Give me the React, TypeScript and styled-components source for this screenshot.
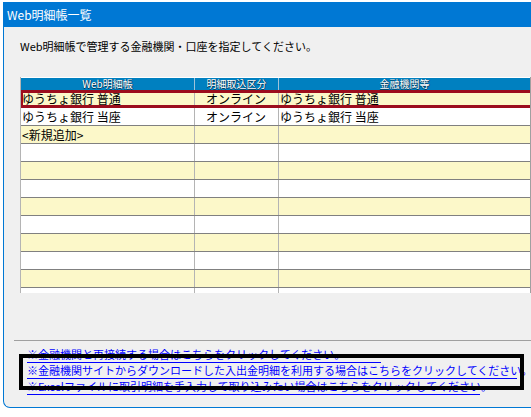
import React from 'react'
import styled, { createGlobalStyle } from 'styled-components'

const GlobalStyle = createGlobalStyle`
    html, body {
        margin     : 0;
        padding    : 0;
        background : #ffffff;
        overflow   : hidden;
    }
    body {
        font-family : "Noto Sans CJK JP", "Noto Sans", sans-serif;
    }
`

type Row = { name: string; mode: string; bank: string }

const rows: Row[] = [
    { name: 'ゆうちょ銀行 普通', mode: 'オンライン', bank: 'ゆうちょ銀行 普通' },
    { name: 'ゆうちょ銀行 当座', mode: 'オンライン', bank: 'ゆうちょ銀行 当座' },
    { name: '<新規追加>', mode: '', bank: '' },
    ...Array.from({ length: 9 }, () => ({ name: '', mode: '', bank: '' })),
]

const links = [
    { text: '※金融機関と再接続する場合はこちらをクリックしてください。', width: 354 },
    { text: '※金融機関サイトからダウンロードした入出金明細を利用する場合はこちらをクリックしてください。', width: 490 },
    { text: '※Excelファイルに取引明細を手入力して取り込みたい場合はこちらをクリックしてください。', width: 453 },
]

const App = () => {
    return (
        <>
            <GlobalStyle />
            <Window>
                <TitleBar>Web明細帳一覧</TitleBar>
                <Content>
                    <Instruction>Web明細帳で管理する金融機関・口座を指定してください。</Instruction>
                    <Table>
                        <HeaderRow>
                            <HeaderCell>Web明細帳</HeaderCell>
                            <HeaderCell>明細取込区分</HeaderCell>
                            <HeaderCell>金融機関等</HeaderCell>
                        </HeaderRow>
                        {rows.map((row, i) => (
                            <BodyRow key={i} $striped={i % 2 === 0} $selected={i === 0}>
                                <Cell>{row.name}</Cell>
                                <Cell $pad={11}>{row.mode}</Cell>
                                <Cell>{row.bank}</Cell>
                            </BodyRow>
                        ))}
                    </Table>
                    <Separator />
                    <LinkArea>
                        {links.map((link, i) => (
                            <LinkLine key={i} $width={link.width}>{link.text}</LinkLine>
                        ))}
                        <FocusFrame />
                    </LinkArea>
                </Content>
            </Window>
        </>
    )
}

export default App

const Window = styled.div`
    margin-top                : 2px;
    margin-left               : 3px;
    width                     : 527px;
    border-left               : 1px solid #0078d4;
    border-bottom             : 1px solid #0078d4;
    border-bottom-left-radius : 7px;
    overflow                  : hidden;
    background                : #f0f0f0;
`

const TitleBar = styled.div`
    height       : 25px;
    line-height  : 25px;
    padding-left : 3px;
    background   : #0078d4;
    color        : #ffffff;
    font-size    : 12px;
`

const Content = styled.div`
    height      : 380px;
    padding-top : 11px;
    box-sizing  : border-box;
`

const Instruction = styled.div`
    margin-left : 16px;
    font-size   : 11px;
    line-height : 16px;
    color       : #000000;
    white-space : nowrap;
`

const Table = styled.div`
    margin-top   : 23px;
    margin-left  : 16px;
    width        : 511px;
    height       : 216px;
    overflow     : hidden;
    border-left  : 1px solid #b4b4b4;
    border-right : 1px solid #a0a0a0;
    box-sizing   : border-box;
    background   : #ffffff;
`

const columns = '174px 84px 1fr'

const HeaderRow = styled.div`
    display               : grid;
    grid-template-columns : ${columns};
    height                : 13px;
    background            : #0080c0;
    border-top            : 1px solid #ffffff;
    box-sizing            : border-box;
`

const HeaderCell = styled.div`
    text-align   : center;
    color        : #ffffff;
    font-size    : 10px;
    line-height  : 12px;
    white-space  : nowrap;
    text-shadow  : 1px 0 0 #003a5c, 0 1px 0 #003a5c;
    border-right : 1px solid #9fc3da;

    &:last-child {
        border-right : 0;
    }
`

const BodyRow = styled.div<{ $striped: boolean; $selected: boolean }>`
    position              : relative;
    display               : grid;
    grid-template-columns : ${columns};
    height                : 18px;
    background            : ${p => (p.$striped ? '#fcf8c9' : '#ffffff')};
    border-bottom         : 1px solid #808080;
    box-sizing            : border-box;

    &::after {
        content        : "";
        display        : ${p => (p.$selected ? 'block' : 'none')};
        position       : absolute;
        inset          : 0 -4px -1px -1px;
        border         : 3px solid #9c0d1d;
        pointer-events : none;
    }
`

const Cell = styled.div<{ $pad?: number }>`
    padding-left : ${p => p.$pad ?? 1}px;
    font-size    : 12px;
    line-height  : 17px;
    color        : #000000;
    white-space  : nowrap;
    overflow     : hidden;
    border-right : 1px solid #b4b4b4;

    &:last-child {
        border-right : 0;
    }
`

const Separator = styled.div`
    margin-top  : 47px;
    margin-left : 10px;
    height      : 1px;
    background  : #a0a0a0;
`

const LinkArea = styled.div`
    position     : relative;
    margin-top   : 6px;
    padding-left : 23px;
`

const LinkLine = styled.div<{ $width: number }>`
    width         : ${p => p.$width}px;
    height        : 15px;
    line-height   : 15px;
    font-size     : 11px;
    color         : #0000ff;
    white-space   : nowrap;
    border-bottom : 1px solid #0000ff;
    cursor        : pointer;
`

const FocusFrame = styled.div`
    position       : absolute;
    left           : 15px;
    top            : 7px;
    width          : 505px;
    height         : 36px;
    border         : 4px solid #000000;
    box-sizing     : border-box;
    pointer-events : none;
`
